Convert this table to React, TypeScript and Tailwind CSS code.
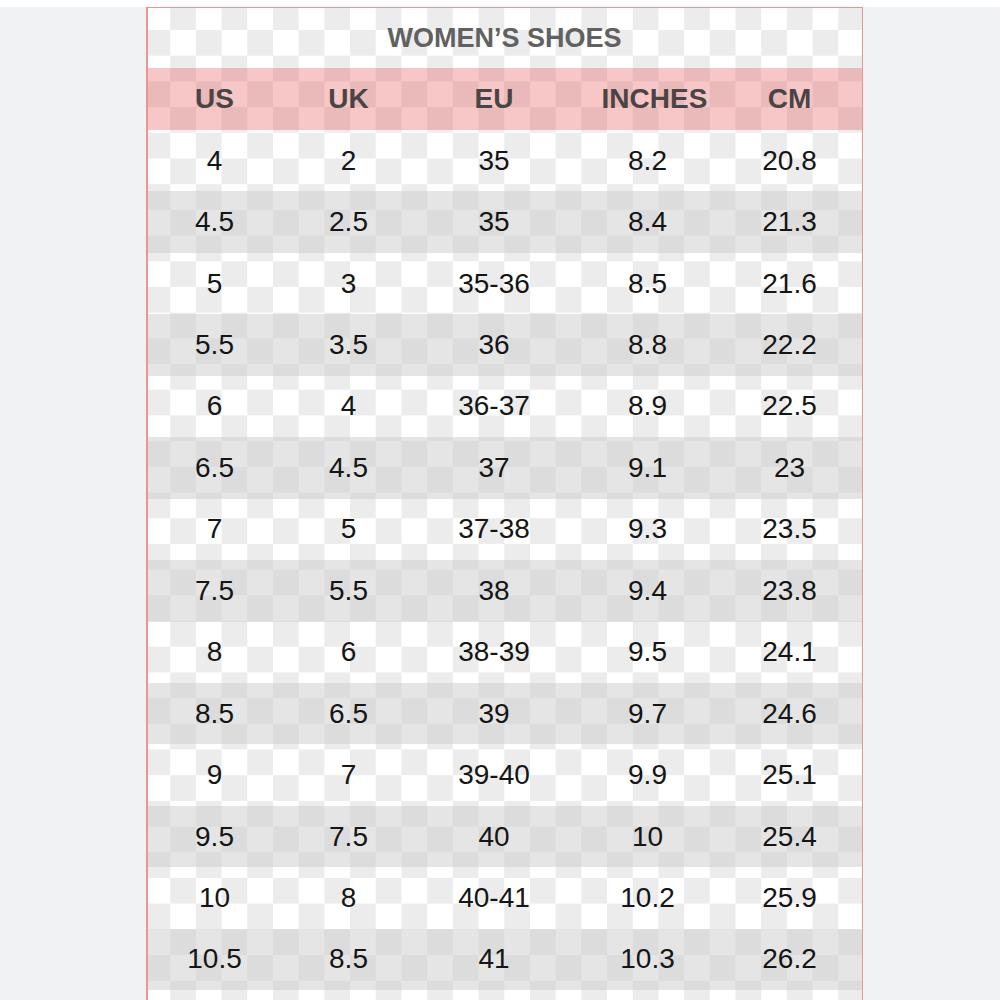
const rows: string[][] = [
  ['4', '2', '35', '8.2', '20.8'],
  ['4.5', '2.5', '35', '8.4', '21.3'],
  ['5', '3', '35-36', '8.5', '21.6'],
  ['5.5', '3.5', '36', '8.8', '22.2'],
  ['6', '4', '36-37', '8.9', '22.5'],
  ['6.5', '4.5', '37', '9.1', '23'],
  ['7', '5', '37-38', '9.3', '23.5'],
  ['7.5', '5.5', '38', '9.4', '23.8'],
  ['8', '6', '38-39', '9.5', '24.1'],
  ['8.5', '6.5', '39', '9.7', '24.6'],
  ['9', '7', '39-40', '9.9', '25.1'],
  ['9.5', '7.5', '40', '10', '25.4'],
  ['10', '8', '40-41', '10.2', '25.9'],
  ['10.5', '8.5', '41', '10.3', '26.2'],
];

const headers = ['US', 'UK', 'EU', 'INCHES', 'CM'];
const widths = ['w-[134px]', 'w-[134px]', 'w-[157px]', 'w-[150px]', 'w-[134px]'];

export default function App() {
  return (
    <div className="h-[1000px] overflow-hidden bg-[#f1f2f4] font-['Liberation_Sans',Arial,sans-serif]">
      <div className="h-[7px] bg-white" />
      {/* size chart card, pink frame drawn by the 1px padding */}
      <div className="ml-[146px] w-[717px] bg-[#ef9494] px-[1.5px] pt-px">
        <div className="bg-[conic-gradient(#ececec_25%,#ffffff_0_50%,#ececec_0_75%,#ffffff_0)] bg-[length:51.4px_51.4px] bg-[position:-3.5px_-3.7px]">
          <div className="h-[60px] flex items-center justify-center text-[27px] font-bold text-[#616161]">
            WOMEN’S SHOES
          </div>
          <div className="h-[62px] flex items-center bg-[rgba(228,70,70,0.3)]">
            {headers.map((h, i) => (
              <div
                key={h}
                className={`${widths[i]} text-center text-[28px] font-bold text-[#4b4444] ${h === 'INCHES' ? 'pl-[14px]' : ''}`}
              >
                {h}
              </div>
            ))}
          </div>
          {rows.map((r, idx) => (
            <div
              key={idx}
              className={`h-[61.45px] flex items-center ${idx % 2 === 1 ? 'bg-[rgba(206,206,206,0.53)]' : ''}`}
            >
              {r.map((v, i) => (
                <div key={i} className={`${widths[i]} text-center text-[28px] text-[#151515]`}>
                  {v}
                </div>
              ))}
            </div>
          ))}
          <div className="h-[40px]" />
        </div>
      </div>
    </div>
  );
}
